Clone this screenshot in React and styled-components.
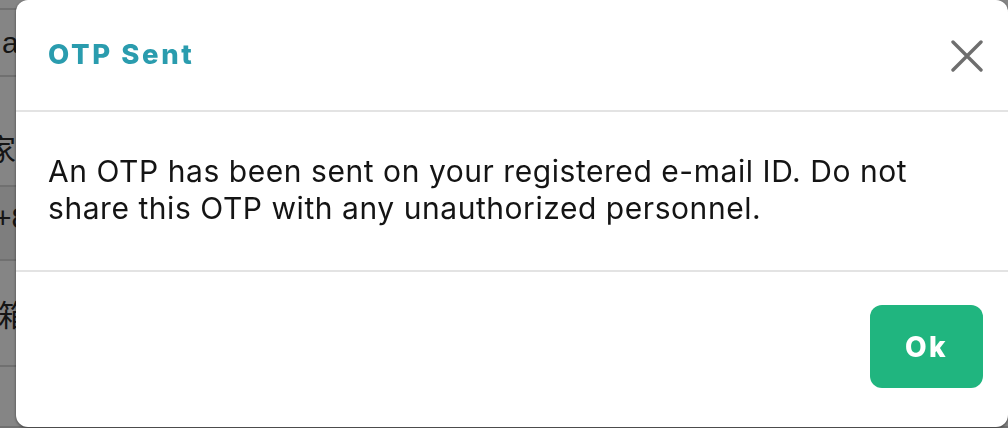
import styled, { createGlobalStyle } from "styled-components";

const GlobalStyle = createGlobalStyle`
  html, body {
    margin: 0;
    padding: 0;
    height: 100%;
    overflow: hidden;
    background: #fff;
    font-family: Inter, "Noto Sans", "Noto Sans CJK SC", sans-serif;
  }
`;

const Page = styled.div`
  display: flex;
  flex-direction: column;
  width: 1008px;
  height: 428px;
`;

const Row = styled.div`
  height: ${props => props.h}px;
  flex-shrink: 0;
  display: flex;
  align-items: ${props => props.align || "center"};
  border-bottom: 2px solid #d6d6d6;
  background: ${props => (props.shade ? "#f1f1f1" : "#fff")};
  box-sizing: border-box;
  overflow: hidden;
`;

const Cell = styled.span`
  font-family: "Liberation Sans", "Noto Sans CJK SC", sans-serif;
  font-size: 30px;
  color: #2a2a2a;
  white-space: nowrap;
  text-indent: ${props => props.indent}px;
  padding-top: ${props => props.top || 0}px;
  display: block;
`;

const Overlay = styled.div`
  position: fixed;
  inset: 0;
  background: rgba(0, 0, 0, 0.48);
  display: flex;
  align-items: flex-start;
  padding-left: 16px;
`;

const Modal = styled.div`
  width: 992px;
  height: 427px;
  background: #fff;
  border-radius: 12px;
  box-shadow: 0 1px 3px rgba(0, 0, 0, 0.5);
  display: flex;
  flex-direction: column;
  overflow: hidden;
`;

const Header = styled.div`
  height: 110px;
  flex-shrink: 0;
  display: flex;
  align-items: center;
  justify-content: space-between;
  padding: 0 25px 0 32px;
  border-bottom: 2px solid #e3e3e3;
`;

const Title = styled.h2`
  margin: 0;
  font-family: Inter, sans-serif;
  font-weight: 800;
  font-size: 27.5px;
  letter-spacing: 2.6px;
  color: #2a9cae;
  padding-bottom: 2px;
`;

const CloseButton = styled.button`
  border: 0;
  background: none;
  padding: 0;
  width: 32px;
  height: 32px;
  display: flex;
  cursor: pointer;
  margin-top: 1px;
`;

const Body = styled.div`
  height: 160px;
  flex-shrink: 0;
  box-sizing: border-box;
  padding: 41px 32px 0;
  border-bottom: 2px solid #e3e3e3;
`;

const Message = styled.p`
  margin: 0;
  max-width: 910px;
  font-family: Inter, sans-serif;
  font-size: 30px;
  letter-spacing: 0.55px;
  line-height: 37px;
  color: #141414;
`;

const Footer = styled.div`
  flex: 1;
  display: flex;
  justify-content: flex-end;
  align-items: flex-start;
  padding: 33px 25px 0;
`;

const OkButton = styled.button`
  width: 113px;
  height: 83px;
  border: 0;
  border-radius: 12px;
  background: #20b57f;
  color: #fff;
  font-family: Inter, sans-serif;
  font-weight: 800;
  font-size: 28px;
  letter-spacing: 2.5px;
  cursor: pointer;
`;

const CloseIcon = () => (
  <svg width="32" height="32" viewBox="0 0 32 32">
    <path
      d="M2 2 L30 30 M30 2 L2 30"
      stroke="#6e6e6e"
      strokeWidth="3.4"
      strokeLinecap="round"
      fill="none"
    />
  </svg>
);

const App = () => {
  return (
    <>
      <GlobalStyle />
      <Page>
        <Row h={10} />
        <Row h={67}>
          <Cell indent={2}>abc@mail.com</Cell>
        </Row>
        <Row h={110} align="flex-start">
          <Cell indent={-14} top={48}>家</Cell>
        </Row>
        <Row h={74} shade align="flex-start">
          <Cell indent={-6} top={14}>+86 138</Cell>
        </Row>
        <Row h={106}>
          <Cell indent={-2}>箱</Cell>
        </Row>
        <Row h={61} />
      </Page>
      <Overlay>
        <Modal>
          <Header>
            <Title>OTP Sent</Title>
            <CloseButton aria-label="Close">
              <CloseIcon />
            </CloseButton>
          </Header>
          <Body>
            <Message>
              An OTP has been sent on your registered e-mail ID. Do not share
              this OTP with any unauthorized personnel.
            </Message>
          </Body>
          <Footer>
            <OkButton>Ok</OkButton>
          </Footer>
        </Modal>
      </Overlay>
    </>
  );
};

export default App;
